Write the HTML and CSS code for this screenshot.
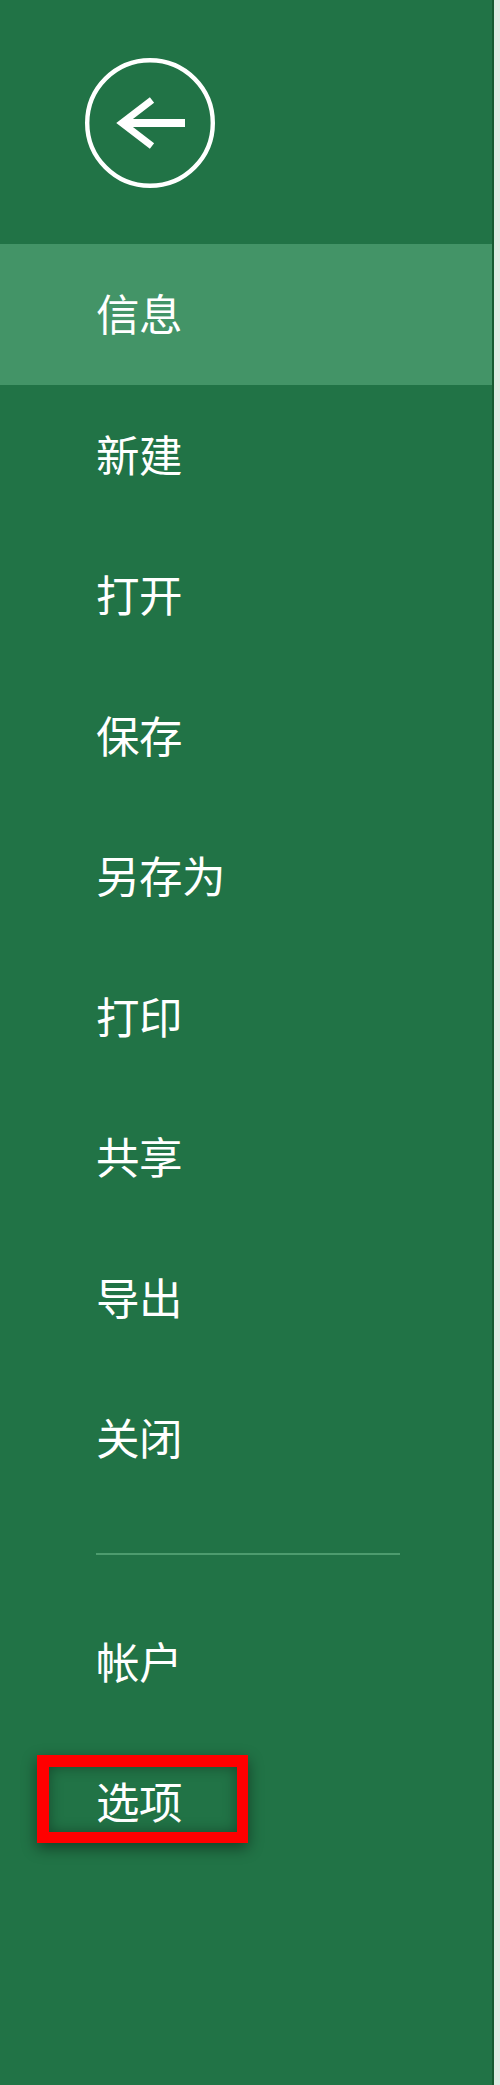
FILE: index.html
```html
<!DOCTYPE html>
<html lang="zh-CN">
<head>
<meta charset="utf-8">
<title>文件</title>
<link rel="stylesheet" href="styles.css">
</head>
<body>
<div class="sidebar">
  <div class="header">
    <svg class="back" width="130" height="130" viewBox="0 0 130 130" aria-label="返回">
      <circle cx="65" cy="65" r="62.8" fill="none" stroke="#fff" stroke-width="4.4"/>
      <path d="M100 65 H39" fill="none" stroke="#fff" stroke-width="8"/>
      <path d="M67 42 L37 65 L67 88" fill="none" stroke="#fff" stroke-width="7" stroke-linejoin="miter"/>
    </svg>
  </div>
  <ul class="nav">
    <li class="item active">信息</li>
    <li class="item">新建</li>
    <li class="item">打开</li>
    <li class="item">保存</li>
    <li class="item">另存为</li>
    <li class="item">打印</li>
    <li class="item">共享</li>
    <li class="item">导出</li>
    <li class="item">关闭</li>
  </ul>
  <div class="sep"></div>
  <ul class="nav nav-bottom">
    <li class="item short">帐户</li>
    <li class="item short marked">选项<span class="highlight-box"></span></li>
  </ul>
</div>
</body>
</html>
```

FILE: styles.css
```css
html, body {
  margin: 0;
  padding: 0;
}

body {
  background: #dfece3;
  width: 500px;
  height: 2085px;
  overflow: hidden;
  font-family: "Noto Sans CJK SC", "Noto Sans", sans-serif;
}

.sidebar {
  width: 492px;
  height: 2085px;
  background: #217346;
  border-right: 2px solid #155a30;
  box-sizing: content-box;
}

.header {
  height: 244px;
  box-sizing: border-box;
  padding: 58px 0 0 85px;
}

.back {
  display: block;
}

.nav {
  list-style: none;
  margin: 0;
  padding: 0;
}

.item {
  height: 140.5px;
  box-sizing: border-box;
  padding: 0 0 3px 96px;
  display: flex;
  align-items: center;
  color: #ffffff;
  font-size: 43.5px;
  line-height: 1;
  letter-spacing: -0.5px;
}

.item.short {
  height: 140px;
}

.item.active {
  background: #439467;
}

.sep {
  width: 304px;
  height: 2px;
  margin: 44px 0 37.5px 96px;
  background: #4d9c6e;
}

.marked {
  position: relative;
}

.highlight-box {
  position: absolute;
  left: 37px;
  top: 23px;
  width: 211px;
  height: 88px;
  box-sizing: border-box;
  border: 12px solid #ff0000;
  border-right-width: 11px;
  border-bottom-width: 11px;
  box-shadow: 0 5px 14px rgba(0, 0, 0, 0.45), inset 0 0 14px rgba(0, 0, 0, 0.35);
}
```
